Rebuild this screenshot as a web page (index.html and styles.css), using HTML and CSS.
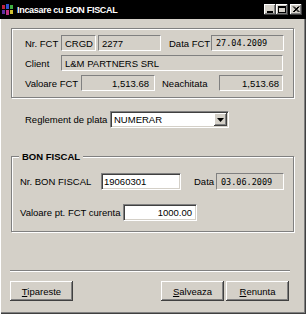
FILE: index.html
```html
<!DOCTYPE html>
<html>
<head>
<meta charset="utf-8">
<link rel="stylesheet" href="styles.css">
</head>
<body>
<div class="window">
  <div class="titlebar">
    <svg class="app-icon" width="13" height="11" viewBox="0 0 13 11">
      <rect x="0" y="1" width="3" height="4" fill="#c02040"/>
      <rect x="0" y="6" width="3" height="4" fill="#6030a0"/>
      <rect x="4" y="0" width="3" height="5" fill="#3050d0"/>
      <rect x="4" y="6" width="3" height="5" fill="#c03080"/>
      <rect x="8" y="1" width="3" height="4" fill="#40b040"/>
      <rect x="8" y="6" width="3" height="4" fill="#d0c030"/>
    </svg>
    <span class="title">Incasare cu BON FISCAL</span>
    <div class="caption-btns">
      <span class="cbtn"><svg width="12" height="11" viewBox="0 0 12 11"><rect x="3" y="7" width="6" height="2" fill="#000"/></svg></span>
      <span class="cbtn"><svg width="12" height="11" viewBox="0 0 12 11"><rect x="2.5" y="2.5" width="7" height="6" fill="none" stroke="#000"/><rect x="2" y="2" width="8" height="2" fill="#000"/></svg></span>
      <span class="cbtn close"><svg width="12" height="11" viewBox="0 0 12 11"><path d="M3 2.5 L8.5 8 M8.5 2.5 L3 8 M4 2.5 L9.5 8 M9.5 2.5 L4 8" stroke="#000" stroke-width="1" fill="none"/></svg></span>
    </div>
  </div>

  <div class="content">
    <div class="group g1">
      <div class="row">
        <span class="lbl w36">Nr. FCT</span>
        <span class="field ro w35">CRGD</span>
        <span class="field ro w63 ml2">2277</span>
        <span class="lbl w42 ml8">Data FCT</span>
        <span class="field ro mono w73">27.04.2009</span>
      </div>
      <div class="row">
        <span class="lbl w36">Client</span>
        <span class="field ro w222">L&amp;M PARTNERS SRL</span>
      </div>
      <div class="row">
        <span class="lbl w56">Valoare FCT</span>
        <span class="field ro num w74">1,513.68</span>
        <span class="lbl w57 ml7">Neachitata</span>
        <span class="field ro num num2 w64">1,513.68</span>
      </div>
    </div>

    <div class="row select-row">
      <span class="lbl w85">Reglement de plata</span>
      <div class="select">
        <span class="select-text">NUMERAR</span>
        <span class="drop"><svg width="7" height="4" viewBox="0 0 7 4"><path d="M0 0 H7 L3.5 4 Z" fill="#000"/></svg></span>
      </div>
    </div>

    <div class="group g2">
      <span class="group-title">BON FISCAL</span>
      <div class="row r17 first">
        <span class="lbl w81">Nr. BON FISCAL</span>
        <span class="field edit w80">19060301</span>
        <span class="lbl w22 ml13">Data</span>
        <span class="field ro mono w68">03.06.2009</span>
      </div>
      <div class="row r17 second">
        <span class="lbl w103">Valoare pt. FCT curenta</span>
        <span class="field edit num w74">1000.00</span>
      </div>
    </div>

    <div class="separator"></div>

    <div class="buttons">
      <button class="btn"><u>T</u>ipareste</button>
      <div class="spacer"></div>
      <button class="btn"><u>S</u>alveaza</button>
      <button class="btn"><u>R</u>enunta</button>
    </div>
  </div>
</div>
</body>
</html>
```

FILE: styles.css
```css
* { box-sizing: border-box; }
html, body { margin: 0; padding: 0; }
body {
  font-family: "Liberation Sans", Arial, sans-serif;
  font-size: 9.5px;
  color: #000;
  background: #d4d0c8;
}
.window {
  width: 306px;
  height: 314px;
  background: #d4d0c8;
  box-shadow: inset 1px 0 #ffffff, inset -1px -1px #404040, inset -2px -2px #808080;
  display: flex;
  flex-direction: column;
  overflow: hidden;
}
.titlebar {
  height: 19px;
  flex: none;
  background: #000;
  color: #fff;
  display: flex;
  align-items: center;
  padding-left: 2px;
}
.app-icon { flex: none; display: block; }
.title {
  font-weight: bold;
  font-size: 9px;
  letter-spacing: -0.3px;
  margin-left: 2px;
  white-space: nowrap;
}
.caption-btns {
  margin-left: auto;
  margin-right: 4px;
  display: flex;
}
.cbtn {
  width: 12px;
  height: 11px;
  background: #d4d0c8;
  box-shadow: inset -1px -1px #404040, inset 1px 1px #ffffff, inset -2px -2px #808080;
  display: block;
}
.cbtn svg { display: block; }
.cbtn.close { margin-left: 2px; }

.content {
  flex: 1;
  display: flex;
  flex-direction: column;
}

.group {
  margin-left: 11px;
  width: 283px;
  border: 1px solid #808080;
  box-shadow: inset 1px 1px #ffffff, 1px 1px #ffffff;
  flex: none;
}
.g1 {
  margin-top: 9px;
  height: 70px;
  padding: 6px 0 0 13px;
  display: flex;
  flex-direction: column;
  gap: 4px;
}
.g2 {
  margin-top: 28px;
  height: 76px;
  padding-left: 8px;
  display: flex;
  flex-direction: column;
}
.group-title {
  font-weight: bold;
  margin-top: -6px;
  margin-left: -1px;
  padding: 0 3px;
  width: max-content;
  line-height: 11px;
  background: #d4d0c8;
}
.row {
  display: flex;
  align-items: center;
  height: 16px;
  flex: none;
}
.r17 { height: 17px; }
.g2 .first { margin-top: 11px; }
.g2 .second { margin-top: 14px; }

.lbl { white-space: nowrap; flex: none; }
.w22 { width: 22px; } .w35 { width: 35px; } .w36 { width: 36px; }
.w42 { width: 42px; } .w56 { width: 56px; } .w57 { width: 57px; }
.w63 { width: 63px; } .w64 { width: 64px; } .w68 { width: 68px; }
.w73 { width: 73px; } .w74 { width: 74px; } .w80 { width: 80px; }
.w81 { width: 81px; } .w85 { width: 85px; } .w103 { width: 103px; }
.w222 { width: 222px; }
.ml2 { margin-left: 2px; } .ml7 { margin-left: 7px; }
.ml8 { margin-left: 8px; } .ml13 { margin-left: 13px; }

.field {
  height: 100%;
  flex: none;
  display: flex;
  align-items: center;
  white-space: nowrap;
  padding-left: 3px;
  overflow: hidden;
}
.ro {
  background: #d4d0c8;
  border-top: 1px solid #808080;
  border-left: 1px solid #808080;
  border-bottom: 1px solid #ffffff;
  border-right: 1px solid #ffffff;
}
.edit {
  background: #ffffff;
  border-top: 1px solid #808080;
  border-left: 1px solid #808080;
  border-bottom: 1px solid #ffffff;
  border-right: 1px solid #ffffff;
  box-shadow: inset 1px 1px #404040, inset -1px -1px #d4d0c8;
  padding-left: 2px;
}
.num {
  justify-content: flex-end;
  padding-right: 5px;
}
.num2 { padding-right: 3px; }
.edit.num { padding-right: 4px; }
.mono {
  font-family: "DejaVu Sans Mono", "Liberation Mono", monospace;
  font-size: 8.5px;
  padding-left: 4px;
}

.select-row {
  margin-top: 13px;
  height: 17px;
  padding-left: 25px;
}
.select {
  width: 119px;
  height: 17px;
  background: #ffffff;
  border-top: 1px solid #808080;
  border-left: 1px solid #808080;
  border-bottom: 1px solid #ffffff;
  border-right: 1px solid #ffffff;
  box-shadow: inset 1px 1px #404040, inset -1px -1px #d4d0c8;
  display: flex;
  align-items: stretch;
  padding: 1px;
}
.select-text {
  flex: 1;
  display: flex;
  align-items: center;
  padding-left: 2px;
}
.drop {
  width: 13px;
  background: #d4d0c8;
  box-shadow: inset -1px -1px #404040, inset 1px 1px #ffffff, inset -2px -2px #808080;
  display: flex;
  align-items: center;
  justify-content: center;
}
.drop svg { display: block; }

.separator {
  margin-top: 38px;
  margin-left: 10px;
  width: 280px;
  height: 2px;
  border-top: 1px solid #808080;
  border-bottom: 1px solid #ffffff;
  flex: none;
}

.buttons {
  margin-top: 9px;
  display: flex;
  padding-left: 10px;
  padding-right: 17px;
  gap: 2px;
}
.spacer { flex: 1; }
.btn {
  width: 63px;
  height: 20px;
  font-family: "Liberation Sans", Arial, sans-serif;
  font-size: 9.5px;
  color: #000;
  background: #d4d0c8;
  border: none;
  padding: 0;
  margin: 0;
  box-shadow: inset -1px -1px #404040, inset 1px 1px #ffffff, inset -2px -2px #808080;
}
.btn u { text-decoration: underline; }
```
